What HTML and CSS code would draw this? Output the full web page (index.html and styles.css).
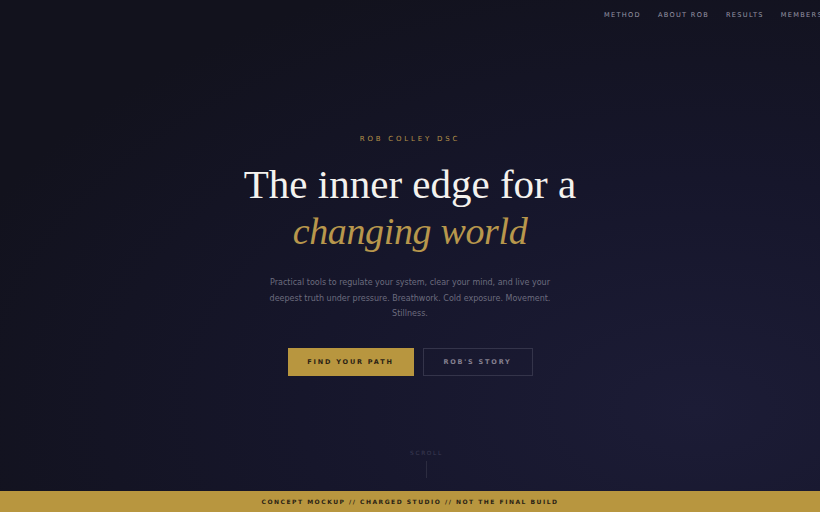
FILE: index.html
```html
<!DOCTYPE html>
<html>
<head>
<meta charset="utf-8">
<link rel="stylesheet" href="styles.css">
</head>
<body>
<div class="page">
  <nav class="nav">
    <a>METHOD</a>
    <a>ABOUT ROB</a>
    <a>RESULTS</a>
    <a>MEMBERS</a>
  </nav>
  <main class="hero">
    <div class="eyebrow">ROB COLLEY DSC</div>
    <h1 class="title">The inner edge for a<br><em>changing world</em></h1>
    <p class="lead">Practical tools to regulate your system, clear your mind, and live your deepest truth under pressure. Breathwork. Cold exposure. Movement. Stillness.</p>
    <div class="actions">
      <a class="btn btn-gold">FIND YOUR PATH</a>
      <a class="btn btn-ghost">ROB'S STORY</a>
    </div>
  </main>
  <div class="scroll">
    <span>SCROLL</span>
    <i class="scroll-line"></i>
  </div>
  <footer class="banner">CONCEPT MOCKUP // CHARGED STUDIO // NOT THE FINAL BUILD</footer>
</div>
</body>
</html>
```
FILE: styles.css
```css
* { box-sizing: border-box; }
html, body { margin: 0; padding: 0; }
body {
  width: 820px;
  height: 512px;
  overflow: hidden;
  font-family: "DejaVu Sans", sans-serif;
  background: #13131f;
}
.page {
  width: 820px;
  height: 512px;
  display: flex;
  flex-direction: column;
  background: radial-gradient(ellipse at 85% 80%, #1c1c36 0%, #16162b 40%, #12121d 80%);
  overflow: hidden;
}
.nav {
  display: flex;
  gap: 17px;
  padding: 11px 0 0 604px;
  white-space: nowrap;
  height: 30px;
}
.nav a {
  font-size: 6.6px;
  letter-spacing: 1.3px;
  color: #9896a6;
}
.hero {
  display: flex;
  flex-direction: column;
  align-items: center;
  padding-top: 105px;
}
.eyebrow {
  font-size: 7px;
  letter-spacing: 2.8px;
  color: #b4924a;
}
.title {
  margin: 18px 0 0;
  font-family: "Liberation Serif", serif;
  font-weight: 400;
  font-size: 41px;
  line-height: 46px;
  color: #f4f2ee;
  text-align: center;
}
.title em {
  color: #b8974c;
  font-style: italic;
  font-size: 38px;
  letter-spacing: -0.35px;
}
.lead {
  margin: 21px 0 0;
  width: 292px;
  font-size: 8px;
  line-height: 15.5px;
  color: #6c6c7e;
  text-align: center;
}
.actions {
  display: flex;
  gap: 9px;
  margin-top: 26px;
}
.btn {
  display: flex;
  align-items: center;
  justify-content: center;
  height: 28px;
  font-size: 6.5px;
  font-weight: bold;
  letter-spacing: 1.8px;
}
.btn-gold {
  width: 126px;
  background: #b8963f;
  color: #2a2214;
}
.btn-ghost {
  width: 110px;
  border: 1px solid #34344a;
  color: #85808f;
}
.scroll {
  display: flex;
  flex-direction: column;
  align-items: center;
  margin-top: 74px;
  padding-left: 33px;
  gap: 5px;
}
.scroll span {
  font-size: 5.8px;
  letter-spacing: 1.7px;
  color: #3d3d55;
}
.scroll-line {
  width: 1px;
  height: 17px;
  background: #2c2c40;
}
.banner {
  margin-top: auto;
  height: 21px;
  background: #b8963f;
  color: #2a2214;
  font-size: 6px;
  font-weight: bold;
  letter-spacing: 1.5px;
  display: flex;
  align-items: center;
  justify-content: center;
}
```
